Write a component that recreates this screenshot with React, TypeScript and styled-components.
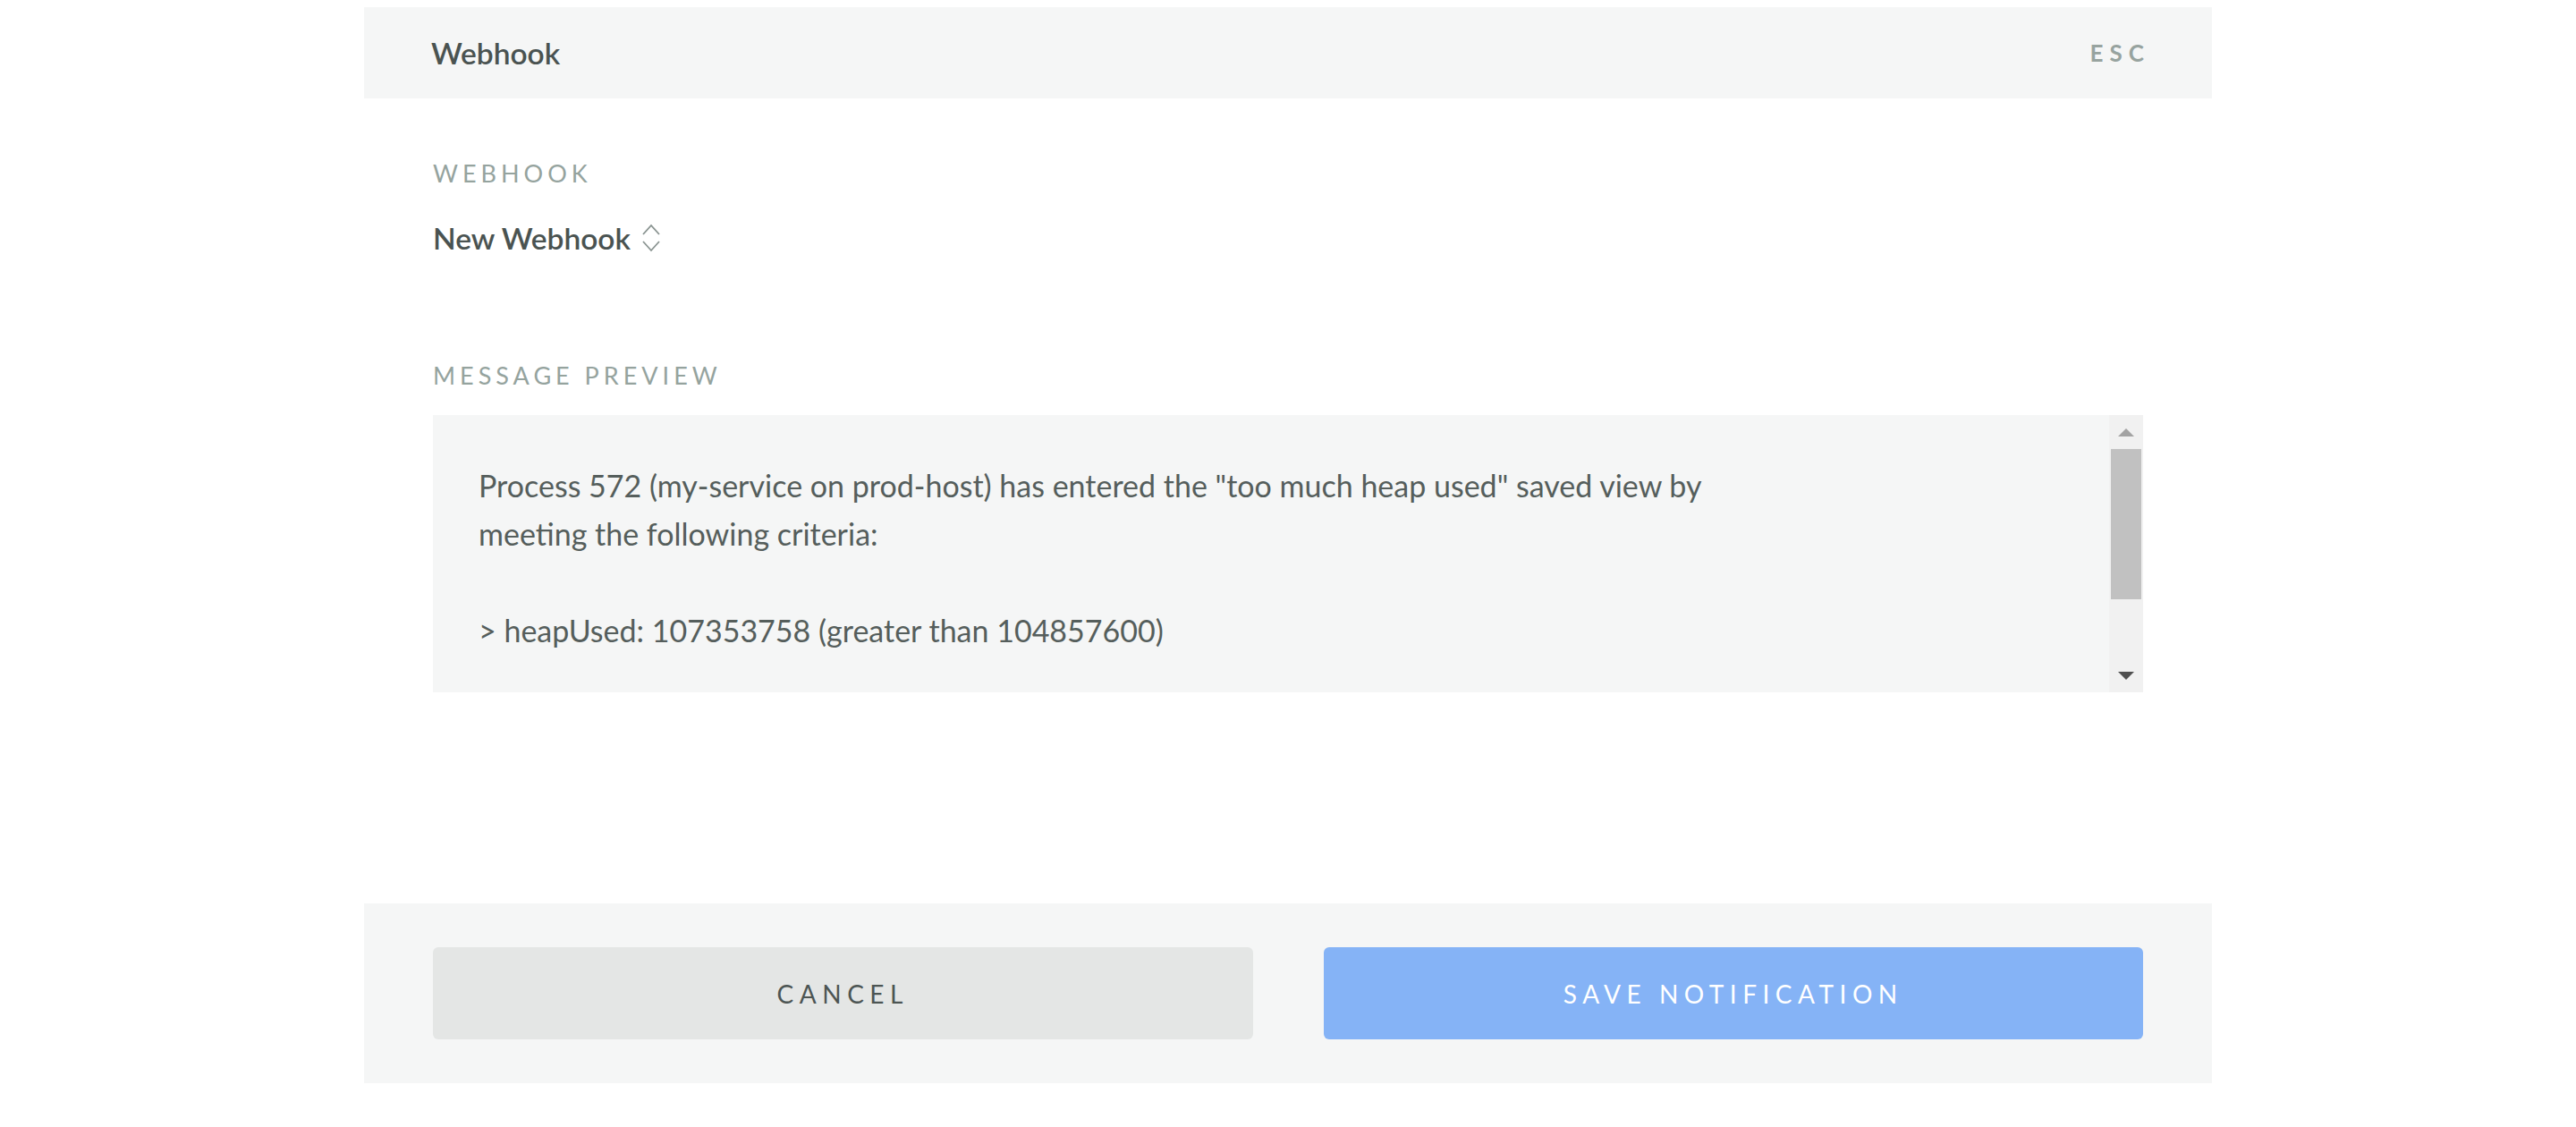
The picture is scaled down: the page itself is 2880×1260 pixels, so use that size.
import React from "react";
import styled, { createGlobalStyle } from "styled-components";

const GlobalStyle = createGlobalStyle`
  html, body {
    margin: 0;
    padding: 0;
    background: #ffffff;
  }
  body {
    font-family: Lato, "Open Sans", "Liberation Sans", sans-serif;
    color: #4c5553;
  }
`;

const Page = styled.div`
  padding-top: 8px;
`;

const Modal = styled.div`
  width: 2066px;
  margin: 0 auto;
  background: #ffffff;
  display: flex;
  flex-direction: column;
`;

const Header = styled.div`
  height: 102px;
  padding: 0 69px 0 75px;
  background: #f5f6f6;
  display: flex;
  align-items: center;
  justify-content: space-between;
`;

const Title = styled.h1`
  margin: 0;
  font-size: 33.5px;
  font-weight: 600;
  color: #4a5351;
`;

const Esc = styled.span`
  font-size: 26px;
  font-weight: 700;
  letter-spacing: 7px;
  color: #97a39f;
`;

const Body = styled.div`
  padding: 68px 77px 0;
  display: flex;
  flex-direction: column;
`;

const Label = styled.div<{ $gap?: number }>`
  margin-top: ${(p) => p.$gap ?? 0}px;
  font-size: 27px;
  line-height: 32px;
  letter-spacing: 5px;
  text-transform: uppercase;
  color: #95a39e;
`;

const Select = styled.div`
  margin-top: 36px;
  display: flex;
  align-items: center;
  gap: 12px;
  height: 40px;
  font-size: 33.5px;
  font-weight: 600;
  color: #4a5351;
`;

const Preview = styled.div`
  margin-top: 28px;
  height: 310px;
  display: flex;
  background: #f5f6f6;
  overflow: hidden;
`;

const PreviewText = styled.div`
  flex: 1;
  padding: 52px 0 0 51px;
  font-size: 34px;
  line-height: 54px;
  white-space: pre-line;
  color: #555e5c;
`;

const Scrollbar = styled.div`
  width: 38px;
  background: #f1f1f1;
  display: flex;
  flex-direction: column;
`;

const ArrowButton = styled.div`
  height: 38px;
  display: flex;
  align-items: center;
  justify-content: center;
`;

const Track = styled.div`
  flex: 1;
  padding: 0 2px;
`;

const Thumb = styled.div`
  height: 168px;
  background: #c1c1c1;
`;

const Footer = styled.div`
  margin-top: 236px;
  padding: 49px 77px;
  background: #f5f6f6;
  display: grid;
  grid-template-columns: 1fr 1fr;
  gap: 79px;
`;

const Button = styled.button<{ $primary?: boolean }>`
  height: 103px;
  border: none;
  border-radius: 6px;
  font-family: Lato, "Open Sans", "Liberation Sans", sans-serif;
  font-size: 28px;
  letter-spacing: 6.5px;
  text-transform: uppercase;
  background: ${(p) => (p.$primary ? "#85b3f6" : "#e4e6e5")};
  color: ${(p) => (p.$primary ? "#ffffff" : "#4c5553")};
  cursor: pointer;
`;

const Chevrons = () => (
  <svg width="22" height="34" viewBox="0 0 22 34" fill="none">
    <path d="M2 13 L11 3 L20 13" stroke="#8a9491" strokeWidth="1.8" />
    <path d="M2 21 L11 31 L20 21" stroke="#8a9491" strokeWidth="1.8" />
  </svg>
);

const Triangle = ({ up, color }: { up?: boolean; color: string }) => (
  <svg width="18" height="9" viewBox="0 0 18 9">
    <path d={up ? "M0 9 L9 0 L18 9 Z" : "M0 0 L9 9 L18 0 Z"} fill={color} />
  </svg>
);

const message = `Process 572 (my-service on prod-host) has entered the "too much heap used" saved view by
meeting the following criteria:

> heapUsed: 107353758 (greater than 104857600)`;

export default function App() {
  return (
    <Page>
      <GlobalStyle />
      <Modal>
        <Header>
          <Title>Webhook</Title>
          <Esc>ESC</Esc>
        </Header>
        <Body>
          <Label>Webhook</Label>
          <Select>
            New Webhook
            <Chevrons />
          </Select>
          <Label $gap={118}>Message Preview</Label>
          <Preview>
            <PreviewText>{message}</PreviewText>
            <Scrollbar>
              <ArrowButton>
                <Triangle up color="#a3a3a3" />
              </ArrowButton>
              <Track>
                <Thumb />
              </Track>
              <ArrowButton>
                <Triangle color="#505050" />
              </ArrowButton>
            </Scrollbar>
          </Preview>
        </Body>
        <Footer>
          <Button>Cancel</Button>
          <Button $primary>Save Notification</Button>
        </Footer>
      </Modal>
    </Page>
  );
}
